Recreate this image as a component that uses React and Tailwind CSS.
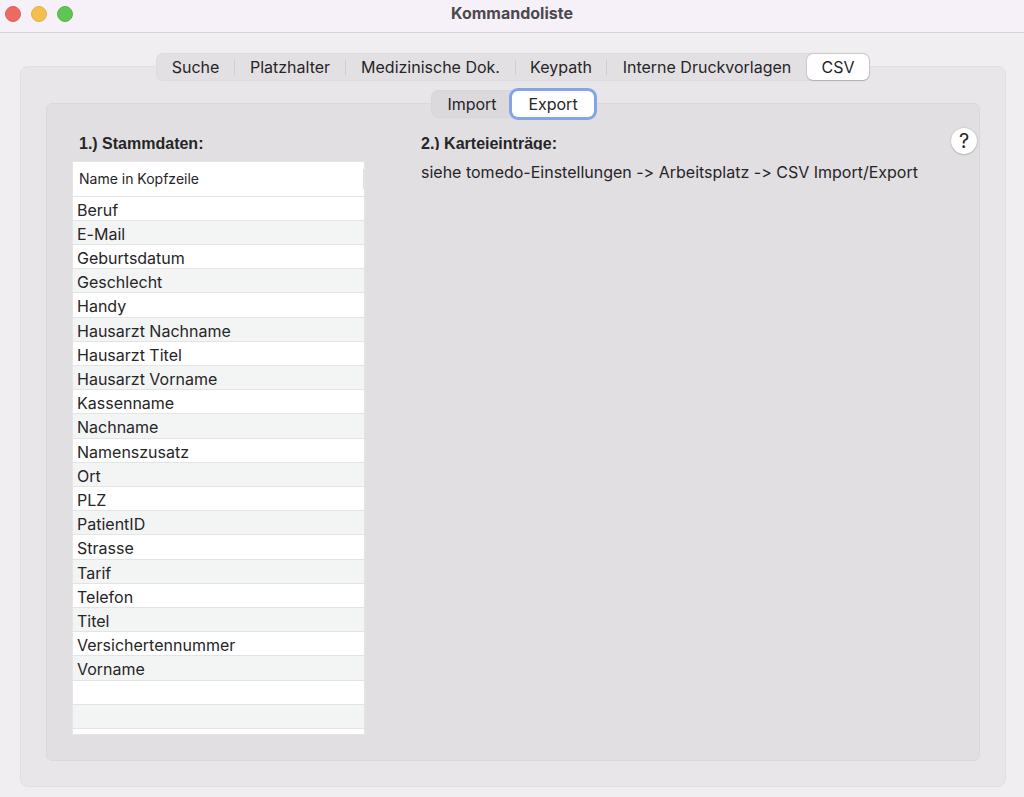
import React from "react";

const mainTabs = [
  { label: "Suche", width: "w-[78px]" },
  { label: "Platzhalter", width: "w-[111px]" },
  { label: "Medizinische Dok.", width: "w-[170px]" },
  { label: "Keypath", width: "w-[91px]" },
  { label: "Interne Druckvorlagen", width: "w-[200px]" },
];

const fields = [
  "Beruf",
  "E-Mail",
  "Geburtsdatum",
  "Geschlecht",
  "Handy",
  "Hausarzt Nachname",
  "Hausarzt Titel",
  "Hausarzt Vorname",
  "Kassenname",
  "Nachname",
  "Namenszusatz",
  "Ort",
  "PLZ",
  "PatientID",
  "Strasse",
  "Tarif",
  "Telefon",
  "Titel",
  "Versichertennummer",
  "Vorname",
  "",
  "",
];

function TitleBar() {
  return (
    <header className="grid h-[33px] shrink-0 grid-cols-[1fr_auto_1fr] items-start border-b border-[#d5d2d7] bg-[#f6f1f8]">
      <div className="flex gap-[10px] pl-[5px] pt-[6px]">
        <button type="button" aria-label="Schließen" className="size-4 rounded-full border border-[#dc6158] bg-[#ec6a5f]" />
        <button type="button" aria-label="Minimieren" className="size-4 rounded-full border border-[#e0b04a] bg-[#f5bf4f]" />
        <button type="button" aria-label="Maximieren" className="size-4 rounded-full border border-[#58b548] bg-[#61c554]" />
      </div>
      <h1 className="pt-[3px] text-base leading-5 font-bold text-[#4b494d]">Kommandoliste</h1>
    </header>
  );
}

function MainTabs() {
  return (
    <div role="tablist" aria-label="Bereiche" className="-mt-[14px] flex h-7 shrink-0 self-center rounded-[7px] border border-[#dddbde] bg-[#e2e0e3]">
      {mainTabs.map((tab, i) => (
        <button
          key={tab.label}
          type="button"
          role="tab"
          aria-selected="false"
          className={`flex items-center justify-center whitespace-nowrap ${tab.width}`}
        >
          <span className="flex-1 text-center">{tab.label}</span>
          {i < mainTabs.length - 1 && <span className="h-[15px] w-px bg-[#cfcdd0]" />}
        </button>
      ))}
      <button type="button" role="tab" aria-selected="true" className="h-[26px] w-[62px] rounded-md bg-white shadow-[0_0_2px_rgba(0,0,0,0.3),0_1px_1px_rgba(0,0,0,0.12)]">
        CSV
      </button>
    </div>
  );
}

function SubTabs() {
  return (
    <div role="tablist" aria-label="CSV" className="-mt-[14px] flex h-7 shrink-0 self-center rounded-[7px] border border-[#d7d5d8] bg-[#dbd9dc]">
      <button type="button" role="tab" aria-selected="false" className="w-20">
        Import
      </button>
      <button type="button" role="tab" aria-selected="true" className="h-[26px] w-[82px] rounded-md bg-white ring-3 ring-[#85a3e8]">
        Export
      </button>
    </div>
  );
}

function FieldTable() {
  return (
    <div className="flex-1 border border-[#e6e4e7] bg-white">
      <table className="h-[567px] w-full border-collapse text-left">
        <thead>
          <tr className="h-[34px] border-b border-[#e3e3e4]">
            <th scope="col" className="p-0 font-normal">
              <div className="flex h-[22px] items-center justify-between pl-[6px] text-sm">
                Name in Kopfzeile
                <span className="h-5 w-px bg-[#dedede]" />
              </div>
            </th>
          </tr>
        </thead>
        <tbody>
          {fields.map((name, i) => (
            <tr key={i} className="h-6 border-b border-[#e3e4e4] even:bg-[#f3f5f5]">
              <td className="px-1 pt-[3px] pb-0 leading-[18px]">{name}</td>
            </tr>
          ))}
        </tbody>
      </table>
    </div>
  );
}

export default function App() {
  return (
    <div className="flex min-h-screen flex-col bg-[#f0eef1] font-['Inter',sans-serif] text-base leading-5 text-[#262527] [font-feature-settings:'calt'_0]">
      <TitleBar />
      <main className="flex flex-1 flex-col pt-[33px] pr-[18px] pb-[10px] pl-5">
        <section className="flex flex-1 flex-col rounded-lg border border-[#e1dfe2] bg-[#e8e6e9] px-[25px] pb-[25px]">
          <MainTabs />
          <section className="mt-[22px] flex flex-1 flex-col rounded-md border border-[#dad8db] bg-[#e1dfe2] pb-[25px]">
            <SubTabs />
            <div className="flex flex-1 gap-14 pt-4 pr-[2px] pl-[25px]">
              <div className="flex w-[293px] flex-col">
                <h2 className="h-[27px] pl-[7px] font-['Liberation_Sans',Arial,sans-serif] font-bold">1.) Stammdaten:</h2>
                <FieldTable />
              </div>
              <div className="flex-1">
                <h2 className="h-4 overflow-hidden font-['Liberation_Sans',Arial,sans-serif] font-bold">2.) Karteieinträge:</h2>
                <p className="mt-3">siehe tomedo-Einstellungen -&gt; Arbeitsplatz -&gt; CSV Import/Export</p>
              </div>
              <button type="button" aria-label="Hilfe" className="-mt-[6px] -ml-14 size-[26px] shrink-0 rounded-full bg-white text-xl leading-[26px] shadow-[0_0_2px_rgba(0,0,0,0.25),0_1px_1px_rgba(0,0,0,0.12)]">
                ?
              </button>
            </div>
          </section>
        </section>
      </main>
    </div>
  );
}
